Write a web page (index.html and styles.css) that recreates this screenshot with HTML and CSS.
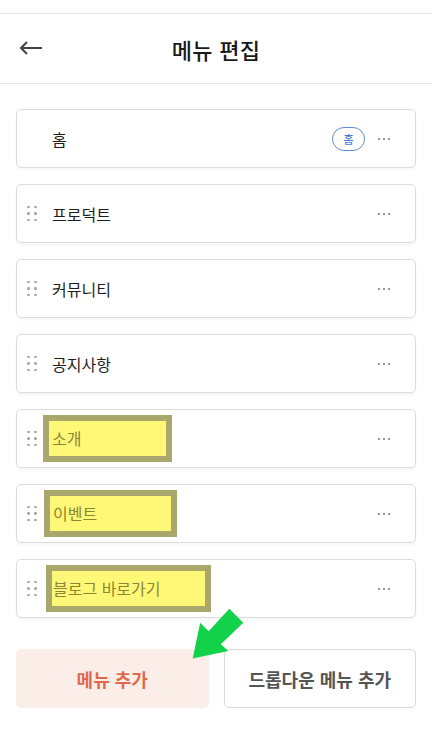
FILE: index.html
```html
<!DOCTYPE html>
<html lang="ko">
<head>
<meta charset="utf-8">
<link rel="stylesheet" href="styles.css">
</head>
<body>
<div class="page">
  <header class="header">
    <button class="back" aria-label="뒤로">
      <svg width="24" height="16" viewBox="0 0 24 16"><path d="M23 8H2M8 2L2 8l6 6" fill="none" stroke="#444" stroke-width="2"/></svg>
    </button>
    <h1 class="title">메뉴 편집</h1>
  </header>
  <main class="list">
    <div class="card">
      <span class="handle blank"></span>
      <span class="label">홈</span>
      <span class="badge">홈</span>
      <span class="more"><i></i><i></i><i></i></span>
    </div>
    <div class="card">
      <span class="handle"><i></i><i></i><i></i><i></i><i></i><i></i></span>
      <span class="label">프로덕트</span>
      <span class="more"><i></i><i></i><i></i></span>
    </div>
    <div class="card">
      <span class="handle"><i></i><i></i><i></i><i></i><i></i><i></i></span>
      <span class="label">커뮤니티</span>
      <span class="more"><i></i><i></i><i></i></span>
    </div>
    <div class="card">
      <span class="handle"><i></i><i></i><i></i><i></i><i></i><i></i></span>
      <span class="label">공지사항</span>
      <span class="more"><i></i><i></i><i></i></span>
    </div>
    <div class="card">
      <span class="handle"><i></i><i></i><i></i><i></i><i></i><i></i></span>
      <span class="label"><span class="mark w1">소개</span></span>
      <span class="more"><i></i><i></i><i></i></span>
    </div>
    <div class="card">
      <span class="handle"><i></i><i></i><i></i><i></i><i></i><i></i></span>
      <span class="label"><span class="mark w2">이벤트</span></span>
      <span class="more"><i></i><i></i><i></i></span>
    </div>
    <div class="card">
      <span class="handle"><i></i><i></i><i></i><i></i><i></i><i></i></span>
      <span class="label"><span class="mark w3">블로그 바로가기</span></span>
      <span class="more"><i></i><i></i><i></i></span>
    </div>
  </main>
  <div class="actions">
    <button class="btn primary">메뉴 추가</button>
    <button class="btn secondary">드롭다운 메뉴 추가</button>
    <svg class="pointer" width="60" height="60" viewBox="188 604 64 64"><polygon points="193,662 201,624 210,633 232,609 247,624 223,647 231,654" fill="#12d24a"/></svg>
  </div>
</div>
</body>
</html>
```
FILE: styles.css
```css
* { box-sizing: border-box; }
html, body { margin: 0; padding: 0; background: #fff; }
body {
  font-family: "Noto Sans CJK KR", "Noto Sans", sans-serif;
  color: #222;
  width: 432px;
  height: 736px;
  overflow: hidden;
}
.page { padding-top: 13px; }
.header {
  position: relative;
  height: 71px;
  border-top: 1px solid #e6e6e6;
  border-bottom: 1px solid #e6e6e6;
  display: flex;
  align-items: center;
  justify-content: center;
}
.back {
  position: absolute;
  left: 19px;
  top: 26px;
  border: 0;
  background: none;
  padding: 0;
  display: flex;
}
.title {
  margin: 0;
  font-size: 22px;
  font-weight: 500;
  color: #1a1a1a;
  letter-spacing: 0.3px;
}
.list {
  padding: 25px 16px 0 16px;
  display: flex;
  flex-direction: column;
  gap: 16px;
}
.card {
  height: 59px;
  border: 1px solid #dcdcdc;
  border-radius: 5px;
  box-shadow: 0 2px 3px rgba(0,0,0,0.04);
  display: flex;
  align-items: center;
  padding: 0 25px 0 10px;
}
.handle {
  width: 10px;
  display: grid;
  grid-template-columns: 2px 2px;
  column-gap: 5px;
  row-gap: 4px;
  margin-right: 15px;
}
.handle i {
  width: 2.5px;
  height: 2.5px;
  border-radius: 50%;
  background: #a8a8a8;
}
.label {
  flex: 1;
  font-size: 16px;
  color: #1e1e1e;
  display: flex;
  align-items: center;
}
.mark {
  display: inline-block;
  background: #fff877;
  border: 6px solid #a9a76c;
  color: #8a8636;
  height: 47px;
  line-height: 35px;
  margin-left: -9px;
  padding-left: 3px;
}
.w1 { width: 129px; }
.w2 { width: 133px; margin-left: -8px; }
.w3 { width: 165px; margin-left: -6px; padding-left: 1px; }
.badge {
  width: 33px;
  height: 24px;
  border: 1px solid #5e8ad6;
  border-radius: 12px;
  color: #4c7cd0;
  font-size: 11px;
  font-weight: 500;
  display: flex;
  align-items: center;
  justify-content: center;
  margin-right: 13px;
}
.more {
  display: flex;
  gap: 3px;
  align-items: center;
}
.more i {
  width: 2px;
  height: 2px;
  border-radius: 50%;
  background: #777;
}
.actions {
  position: relative;
  margin-top: 31px;
  padding: 0 16px;
  display: flex;
  gap: 15px;
}
.btn {
  flex: 1;
  height: 59px;
  border-radius: 5px;
  font-family: "Noto Sans CJK KR", "Noto Sans", sans-serif;
  font-size: 18px;
  font-weight: 700;
}
.primary {
  background: #fbeee9;
  border: 1px solid #fbeee9;
  color: #e0694d;
}
.secondary {
  background: #fff;
  border: 1px solid #d8d8d8;
  color: #555;
}
.pointer {
  position: absolute;
  left: 188px;
  top: -45px;
}
```
